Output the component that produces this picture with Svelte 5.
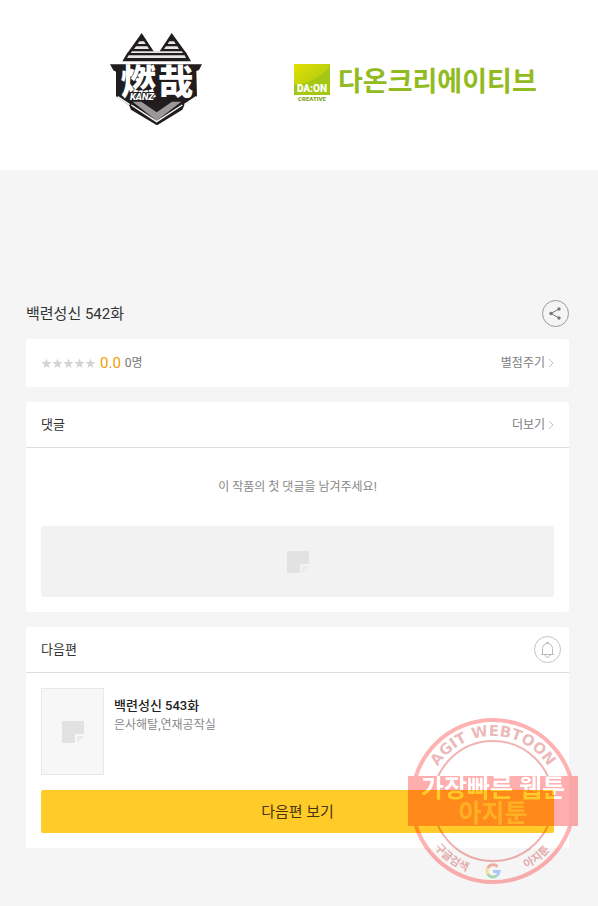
<script>
    const episode = {
        title: '백련성신 542화',
        score: '0.0',
        voters: 0
    };

    const next = {
        title: '백련성신 543화',
        authors: '은사해탈,연재공작실'
    };

    const stars = [1, 2, 3, 4, 5];
</script>

{#snippet arrow()}
    <svg class="arrow" viewBox="0 0 6 10" aria-hidden="true">
        <path d="M1 1l4 4-4 4" />
    </svg>
{/snippet}

{#snippet placeholder()}
    <svg class="placeholder" viewBox="0 0 22 22" aria-hidden="true">
        <path d="M0 0h22v13h-9v9H0z" fill="#e2e2e2" />
        <path d="M15 15h7l-7 7z" fill="#ebebeb" />
    </svg>
{/snippet}

<div class="page">
    <header class="publishers">
        <svg class="kanz" viewBox="30 24 276 276" role="img" aria-label="燃哉 KANZ">
            <!-- ears -->
            <path d="M125 24l38 58H84zM215 24l42 58h-80zM84 80h173l16 29H67z" fill="#211d1e" />
            <path d="M118 49h14l5 8h-24zM208 49h14l5 8h-24zM108 64h34l5 8h-45zM198 64h34l5 8h-45zM96 79h150l3 5H92zM86 91h168l4 8H81z" fill="#e6e6e6" />
            <!-- shield -->
            <path d="M30 118h276l-9 17-8 3 2 76-38 27-6 13-76 47-78-47-6-13-39-27V140l-8-4z" fill="#211d1e" />
            <path d="M53 215l36 24M289 215l-36 24M97 262l22 13M245 262l-22 13" stroke="#fff" stroke-width="4" />
            <path d="M98 230h26l46 32 46-32h28l-74 57z" fill="#9a9899" />
            <path d="M94 240l76 50 77-50" fill="none" stroke="#fff" stroke-width="4" />
            <text class="kanz-name" x="62" y="211">燃</text>
            <text class="kanz-name" x="174" y="211">哉</text>
            <text class="kanz-sub" x="90" y="226">KANZ</text>
        </svg>

        <svg class="daon" viewBox="0 0 243 40" role="img" aria-label="다온크리에이티브">
            <defs>
                <linearGradient id="leaf" x1="0" y1="0" x2="1" y2="1">
                    <stop offset="0" stop-color="#e3e000" />
                    <stop offset="1" stop-color="#9cc31c" />
                </linearGradient>
            </defs>
            <rect x="1" y="4" width="36" height="31" fill="url(#leaf)" />
            <path d="M1 25C14 24 28 18 37 6v29H1z" fill="#a4c813" />
            <text class="daon-mark" x="19" y="32">DA:ON</text>
            <text class="daon-sub" x="19" y="41">CREATIVE</text>
            <text class="daon-name" x="45" y="31">다온크리에이티브</text>
        </svg>
    </header>

    <main>
        <div class="title">
            <h1>{episode.title}</h1>
            <button class="round share" aria-label="공유하기">
                <svg viewBox="0 0 27 27" aria-hidden="true">
                    <path d="M17 9l-8 4.500 8 4.500" fill="none" stroke="#777" />
                    <circle cx="17" cy="9" r="1.700" />
                    <circle cx="9" cy="13.500" r="1.700" />
                    <circle cx="17" cy="18" r="1.700" />
                </svg>
            </button>
        </div>

        <section class="card rating">
            <div class="score">
                <span class="stars" role="img" aria-label="별점">
                    {#each stars as star (star)}
                        <svg viewBox="0 0 11 11">
                            <path d="M5.500 0.500l1.300 3.500 3.700.1-2.900 2.300 1 3.600-3.100-2.100L2.400 10l1-3.600L.5 4.100l3.700-.1z" />
                        </svg>
                    {/each}
                </span>
                <strong>{episode.score}</strong>
                <span class="voters">{episode.voters}명</span>
            </div>
            <a class="more" href="#rate">별점주기 {@render arrow()}</a>
        </section>

        <section class="card">
            <div class="card-head">
                <h2>댓글</h2>
                <a class="more" href="#comments">더보기 {@render arrow()}</a>
            </div>
            <p class="empty">이 작품의 첫 댓글을 남겨주세요!</p>
            <div class="banner">{@render placeholder()}</div>
        </section>

        <section class="card">
            <div class="card-head">
                <h2>다음편</h2>
                <button class="round bell" aria-label="알림받기">
                    <svg viewBox="0 0 27 27" aria-hidden="true">
                        <path d="M7 18.500h13M8.500 18.500v-6a5 5 0 0 1 10 0v6M12.500 7.500v-1h2v1M11 19c.5 3 4.500 3 5 0" fill="none" stroke="#bbb" />
                    </svg>
                </button>
            </div>
            <div class="next">
                <div class="thumb">{@render placeholder()}</div>
                <div>
                    <h3>{next.title}</h3>
                    <p>{next.authors}</p>
                </div>
            </div>
            <button class="go">다음편 보기</button>
        </section>
    </main>

    <!-- seal floating over the page -->
    <svg class="seal" viewBox="0 0 170 170" role="img" aria-label="AGIT WEBTOON 가장빠른 웹툰 아지툰">
        <defs>
            <path id="arc-top" d="M20 85a65 65 0 0 1 130 0" />
            <path id="arc-bottom" d="M10 85a75 75 0 0 0 150 0" />
            <mask id="cut" maskUnits="userSpaceOnUse" x="0" y="0" width="170" height="170">
                <rect width="170" height="170" fill="#fff" />
                <text class="seal-big" x="85" y="81" fill="#000">가장빠른 웹툰</text>
                <text class="seal-big" x="85" y="106" fill="#666">아지툰</text>
            </mask>
            <clipPath id="outside">
                <path d="M0 0h170v60H0zM0 110h170v60H0z" />
            </clipPath>
        </defs>
        <g clip-path="url(#outside)" fill="none">
            <circle cx="85" cy="85" r="81" stroke="#f00" stroke-opacity="0.3" stroke-width="4" />
            <circle cx="85" cy="85" r="60" stroke="#d00000" stroke-opacity="0.3" stroke-width="2" />
        </g>
        <rect y="60" width="170" height="50" fill="#f00" fill-opacity="0.32" mask="url(#cut)" />
        <text class="seal-en"><textPath href="#arc-top" startOffset="50%">AGIT WEBTOON</textPath></text>
        <text class="seal-ko"><textPath href="#arc-bottom" startOffset="30%">구글검색</textPath></text>
        <text class="seal-ko"><textPath href="#arc-bottom" startOffset="71%">아지툰</textPath></text>
        <g fill="none" stroke-width="3" opacity="0.4">
            <path d="M89.600 150.700a6 6 0 0 0-9.800 1.300" stroke="#ea4335" />
            <path d="M79.800 152a6 6 0 0 0 0 6" stroke="#fbbc05" />
            <path d="M79.800 158a6 6 0 0 0 9 1.700" stroke="#34a853" />
            <path d="M88.800 159.700a6 6 0 0 0 2.200-4.200h-6" stroke="#4285f4" />
        </g>
    </svg>
</div>

<style>
    :global(body) {
        margin: 0;
        background: #f5f5f5;
    }

    .page {
        position: relative;
        font-family: Roboto, "Noto Sans CJK KR", sans-serif;
        font-size: 12px;
        line-height: 18px;
        color: #333;
    }

    h1, h2, h3, p {
        margin: 0;
        font-weight: 400;
    }

    button {
        padding: 0;
        font-family: inherit;
        cursor: pointer;
    }

    svg {
        display: block;
    }

    /* publisher logos */
    .publishers {
        display: flex;
        justify-content: space-between;
        align-items: flex-start;
        box-sizing: border-box;
        height: 170px;
        padding: 33px 62px 0 110px;
        background: #fff;
    }

    .kanz {
        width: 92px;
        height: 92px;
    }

    .kanz-name {
        font-family: "Noto Sans CJK SC", sans-serif;
        font-size: 106px;
        font-weight: 900;
        fill: #fff;
    }

    .kanz-sub {
        font-size: 28px;
        font-style: italic;
        font-weight: 900;
        fill: #fff;
        stroke: #211d1e;
        stroke-width: 6px;
        paint-order: stroke;
    }

    .daon {
        width: 243px;
        height: 40px;
        margin-top: 27px;
        overflow: visible;
    }

    .daon-name {
        font-size: 27px;
        font-weight: 700;
        fill: #92bb22;
    }

    .daon-mark {
        font-size: 10px;
        font-weight: 900;
        fill: #fff;
        text-anchor: middle;
    }

    .daon-sub {
        font-size: 6px;
        font-weight: 900;
        fill: #7fa51d;
        text-anchor: middle;
    }

    /* content */
    main {
        padding: 130px 29px 58px 26px;
    }

    .title {
        display: flex;
        justify-content: space-between;
        align-items: center;
        margin-bottom: 12px;
    }

    h1 {
        font-size: 15px;
    }

    .round {
        box-sizing: border-box;
        width: 27px;
        height: 27px;
        border: 1px solid #999;
        border-radius: 50%;
        background: none;
    }

    .round svg {
        width: 27px;
        height: 27px;
        margin: -1px;
    }

    .share {
        fill: #777;
    }

    .bell {
        margin-right: -7px;
        border-color: #c4c4c4;
    }

    .card {
        margin-bottom: 15px;
        border-radius: 2px;
        background: #fff;
    }

    .card:last-child {
        margin-bottom: 0;
        padding-bottom: 15px;
    }

    .rating {
        display: flex;
        justify-content: space-between;
        align-items: center;
        height: 48px;
        padding: 0 15px;
    }

    .score {
        display: flex;
        align-items: center;
        gap: 4px;
    }

    .score strong {
        font-size: 15px;
        font-weight: 400;
        color: #eba000;
    }

    .stars {
        display: flex;
    }

    .stars svg {
        width: 11px;
        height: 11px;
        fill: #d3d3d3;
    }

    .voters {
        color: #777;
    }

    .more {
        display: flex;
        align-items: center;
        gap: 3px;
        color: #808080;
        text-decoration: none;
    }

    .arrow {
        width: 6px;
        height: 10px;
        fill: none;
        stroke: #c4c4c4;
    }

    .card-head {
        display: flex;
        justify-content: space-between;
        align-items: center;
        height: 45px;
        padding: 0 15px;
        border-bottom: 1px solid #ddd;
    }

    h2 {
        font-size: 13px;
    }

    .empty {
        padding: 30px 15px;
        text-align: center;
        color: #888;
    }

    .banner {
        display: flex;
        justify-content: center;
        align-items: center;
        height: 71px;
        margin: 0 15px;
        border-radius: 2px;
        background: #f2f2f2;
    }

    .card:has(.banner) {
        padding-bottom: 15px;
    }

    .placeholder {
        width: 22px;
        height: 22px;
    }

    .next {
        display: flex;
        gap: 10px;
        padding: 15px;
    }

    .thumb {
        display: flex;
        justify-content: center;
        align-items: center;
        box-sizing: border-box;
        width: 63px;
        height: 87px;
        border: 1px solid #e8e8e8;
        background: #f7f7f7;
    }

    h3 {
        margin-top: 8px;
        font-size: 13px;
        font-weight: 500;
        line-height: 20px;
        color: #222;
    }

    .next p {
        color: #888;
    }

    .go {
        display: block;
        width: calc(100% - 30px);
        height: 43px;
        margin: 0 15px;
        padding-bottom: 2px;
        border: 0;
        border-radius: 2px;
        background: #ffcb28;
        font-size: 15px;
        color: #4a3510;
    }

    .seal {
        position: absolute;
        top: 716px;
        right: 20px;
        width: 170px;
        height: 170px;
        pointer-events: none;
    }

    .seal text {
        text-anchor: middle;
    }

    .seal-big {
        font-size: 25px;
        font-weight: 700;
    }

    .seal-en {
        font-family: "DejaVu Sans", sans-serif;
        font-size: 15px;
        font-weight: 700;
        fill: #c83232;
        fill-opacity: 0.35;
    }

    .seal-ko {
        font-size: 11px;
        font-weight: 700;
        fill: #c83232;
        fill-opacity: 0.4;
    }
</style>
